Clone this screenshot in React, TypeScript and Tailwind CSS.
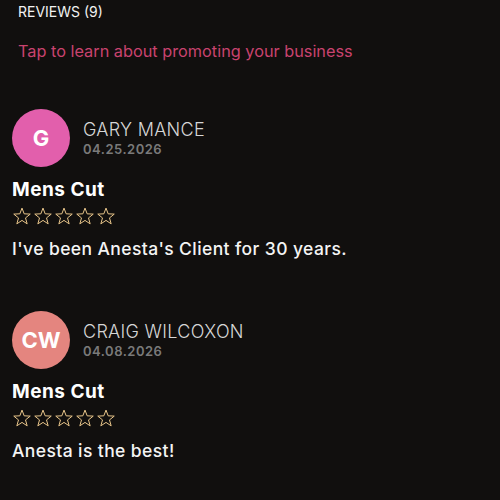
import React from 'react';

interface Review {
  initials: string;
  name: string;
  date: string;
  service: string;
  text: string;
  color: string;
}

const reviews: Review[] = [
  { initials: 'G', name: 'GARY MANCE', date: '04.25.2026', service: 'Mens Cut', text: "I've been Anesta's Client for 30 years.", color: 'bg-[#e25fac]' },
  { initials: 'CW', name: 'CRAIG WILCOXON', date: '04.08.2026', service: 'Mens Cut', text: 'Anesta is the best!', color: 'bg-[#e4857f]' },
];

const Star = () => (
  <svg width="20" height="20" viewBox="0 0 24 24" fill="none" stroke="#e8c58a" strokeWidth="1.2" strokeLinejoin="miter">
    <path d="M12 2.5l2.6 6.9 7.3.3-5.7 4.6 2 7.1L12 17.3l-6.2 4.1 2-7.1-5.7-4.6 7.3-.3z" />
  </svg>
);

const App: React.FC = () => {
  return (
    <div className="w-[500px] h-[500px] overflow-hidden bg-[#110f0e] text-white font-['Inter',sans-serif]">
      <div className="pl-[18px] pt-[3px] text-[14px] leading-[18px] text-[#f2f2f2]">REVIEWS (9)</div>
      <div className="pl-[18px] mt-[20px] text-[16.3px] leading-[20px] text-[#c9436f]">
        Tap to learn about promoting your business
      </div>

      <div className="mt-[48px] flex flex-col gap-[51px]">
        {reviews.map((r) => (
          <div key={r.name} className="px-[12px]">
            <div className="flex items-center gap-[13px]">
              <div className={`w-[58px] h-[58px] rounded-full ${r.color} flex items-center justify-center text-[22px] font-bold text-white`}>
                {r.initials}
              </div>
              <div className="flex flex-col">
                <span className="text-[18px] leading-[22px] font-light text-[#d6d6d6] tracking-[0.3px]">{r.name}</span>
                <span className="text-[13px] leading-[16px] font-semibold text-[#7a7a7a] tracking-[0.5px]">{r.date}</span>
              </div>
            </div>
            <div className="mt-[11px] text-[19px] leading-[24px] font-bold tracking-[0.5px]">{r.service}</div>
            <div className="mt-[4px] flex gap-[1px]">
              {[0, 1, 2, 3, 4].map((i) => (
                <Star key={i} />
              ))}
            </div>
            <div className="mt-[12px] text-[17.5px] leading-[22px] font-medium tracking-[0.4px] text-[#f4f4f4]">{r.text}</div>
          </div>
        ))}
      </div>
    </div>
  );
};

export default App;
